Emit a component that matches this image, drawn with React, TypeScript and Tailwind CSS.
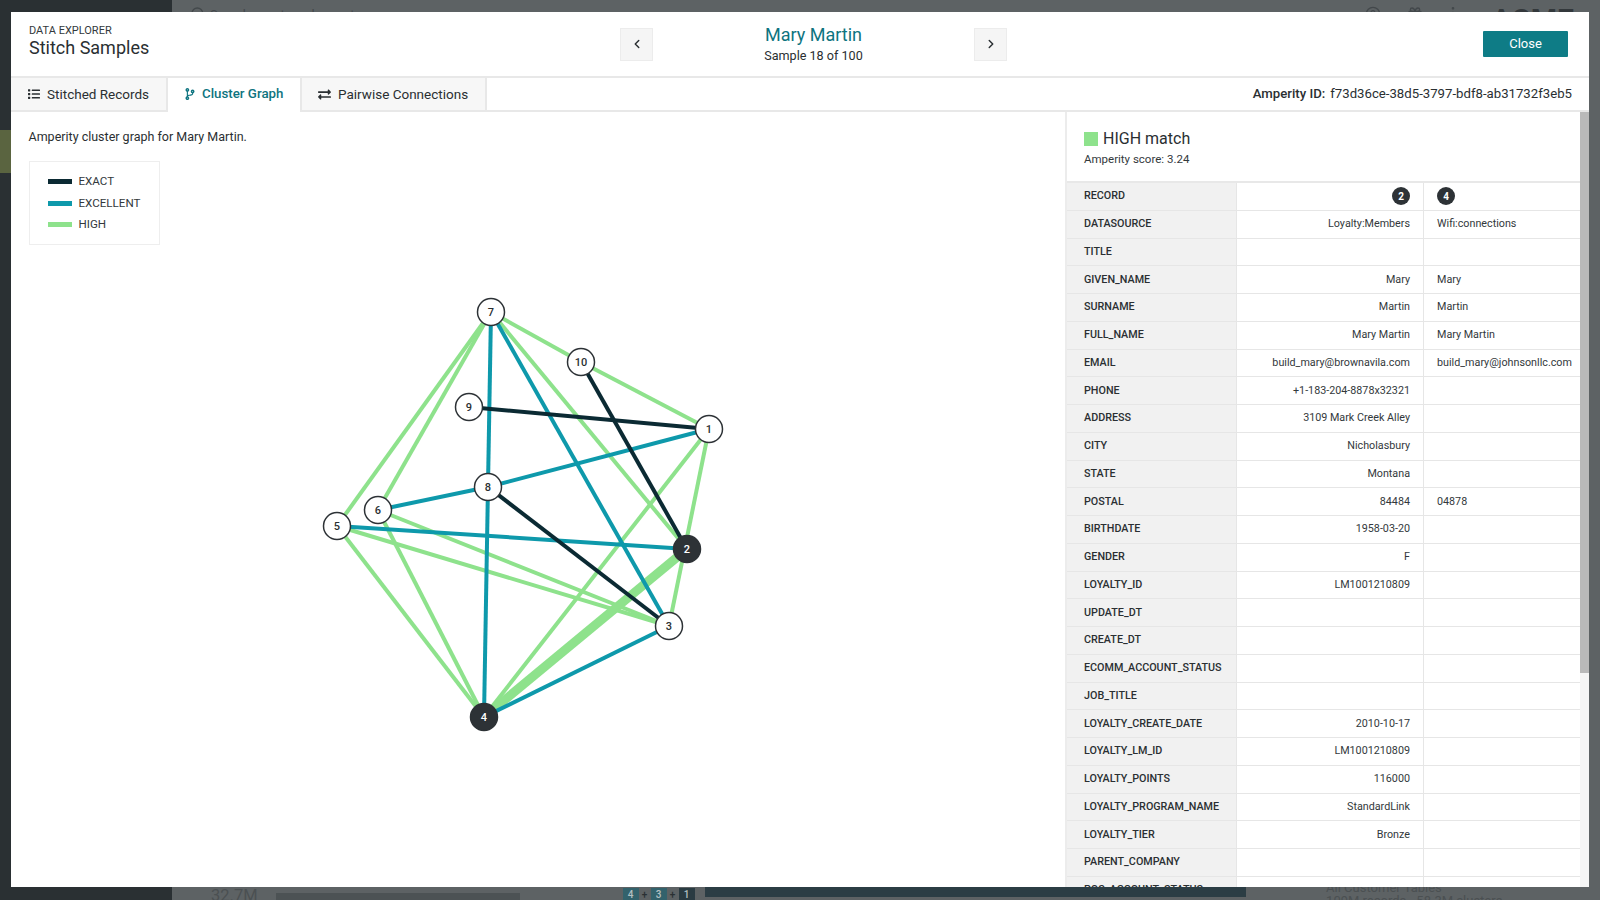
import { ChevronLeft, ChevronRight, Search, Gift, CircleHelp, EllipsisVertical, ChevronDown } from "lucide-react";
import { FaCodeBranch, FaExchangeAlt, FaList } from "react-icons/fa";

const TEAL = "#0e7c86";
const EXACT = "#0b2a33";
const EXCELLENT = "#0e99ab";
const HIGH = "#8ee28c";

const nodes: Record<number, [number, number]> = {
  1: [709, 429],
  2: [687, 549],
  3: [669, 626],
  4: [484, 717],
  5: [337, 526],
  6: [378, 510],
  7: [491, 312],
  8: [488, 487],
  9: [469, 407],
  10: [581, 362],
};

// from, to, colour, thickness
const edges: [number, number, string, number][] = [
  [7, 5, HIGH, 4],
  [7, 6, HIGH, 4],
  [7, 10, HIGH, 4],
  [7, 2, HIGH, 4],
  [10, 1, HIGH, 4],
  [1, 4, HIGH, 4],
  [1, 3, HIGH, 4],
  [5, 3, HIGH, 4],
  [6, 3, HIGH, 4],
  [5, 4, HIGH, 4],
  [6, 4, HIGH, 4],
  [2, 4, HIGH, 9],
  [7, 4, EXCELLENT, 4],
  [7, 3, EXCELLENT, 4],
  [8, 1, EXCELLENT, 4],
  [8, 6, EXCELLENT, 4],
  [5, 2, EXCELLENT, 4],
  [3, 4, EXCELLENT, 4],
  [10, 2, EXACT, 4],
  [9, 1, EXACT, 4],
  [8, 3, EXACT, 4],
];

const rows: [string, string, string][] = [
  ["DATASOURCE", "Loyalty:Members", "Wifi:connections"],
  ["TITLE", "", ""],
  ["GIVEN_NAME", "Mary", "Mary"],
  ["SURNAME", "Martin", "Martin"],
  ["FULL_NAME", "Mary Martin", "Mary Martin"],
  ["EMAIL", "build_mary@brownavila.com", "build_mary@johnsonllc.com"],
  ["PHONE", "+1-183-204-8878x32321", ""],
  ["ADDRESS", "3109 Mark Creek Alley", ""],
  ["CITY", "Nicholasbury", ""],
  ["STATE", "Montana", ""],
  ["POSTAL", "84484", "04878"],
  ["BIRTHDATE", "1958-03-20", ""],
  ["GENDER", "F", ""],
  ["LOYALTY_ID", "LM1001210809", ""],
  ["UPDATE_DT", "", ""],
  ["CREATE_DT", "", ""],
  ["ECOMM_ACCOUNT_STATUS", "", ""],
  ["JOB_TITLE", "", ""],
  ["LOYALTY_CREATE_DATE", "2010-10-17", ""],
  ["LOYALTY_LM_ID", "LM1001210809", ""],
  ["LOYALTY_POINTS", "116000", ""],
  ["LOYALTY_PROGRAM_NAME", "StandardLink", ""],
  ["LOYALTY_TIER", "Bronze", ""],
  ["PARENT_COMPANY", "", ""],
  ["POS_ACCOUNT_STATUS", "", ""],
];

function RecordBadge({ n }: { n: number }) {
  return (
    <span className="flex h-[18px] w-[18px] items-center justify-center rounded-full bg-[#2d3236] text-[10px] font-bold text-white">
      {n}
    </span>
  );
}

function Row({ label, left, right }: { label: string; left: React.ReactNode; right: React.ReactNode }) {
  return (
    <div className="flex h-[27.75px] shrink-0 border-b border-[#e6e6e6] text-[10.75px] text-[#33393c]">
      <div className="flex w-[170px] shrink-0 items-center border-r border-[#e6e6e6] bg-[#f1f1f1] pl-[17px] font-medium text-[#2a2f32]">
        {label}
      </div>
      <div className="flex w-[187px] shrink-0 items-center justify-end border-r border-[#e6e6e6] pr-[13px]">{left}</div>
      <div className="flex flex-1 items-center pl-[13px]">{right}</div>
    </div>
  );
}

function Graph() {
  // viewBox uses page coords, so node positions read straight off the screenshot
  return (
    <svg width="500" height="480" viewBox="310 290 500 480" className="block">
      {edges.map(([a, b, color, w], i) => (
        <line key={i} x1={nodes[a][0]} y1={nodes[a][1]} x2={nodes[b][0]} y2={nodes[b][1]} stroke={color} strokeWidth={w} />
      ))}
      {Object.entries(nodes).map(([id, [x, y]]) => {
        const filled = id === "2" || id === "4";
        return (
          <g key={id}>
            <circle cx={x} cy={y} r="13.5" fill={filled ? "#2d3236" : "#fff"} stroke="#2d3236" strokeWidth="1.5" />
            <text x={x} y={y + 4} textAnchor="middle" fontSize="11" fontWeight="500" fill={filled ? "#fff" : "#2a2f32"}>
              {id}
            </text>
          </g>
        );
      })}
    </svg>
  );
}

export default function App() {
  return (
    <div className="relative flex h-[900px] w-[1600px] overflow-hidden bg-[#5d6264] font-['Roboto',sans-serif]">
      {/* page behind the modal */}
      <div className="w-[172px] shrink-0 bg-[#2a3033] pt-[130px]">
        <div className="h-[43px] w-[11px] bg-[#5a6440]" />
      </div>
      <div className="flex flex-1 flex-col justify-between text-[#43484b]">
        <div className="flex items-start pl-[18px] pr-[12px] pt-[5px]">
          <Search size={16} className="mt-[1px]" />
          <span className="ml-[4px] text-[13px]">Search assets, columns to</span>
          <div className="ml-auto flex items-start">
            <CircleHelp size={16} className="mt-[1px]" />
            <Gift size={16} className="ml-[26px] mt-[1px]" />
            <EllipsisVertical size={16} className="ml-[22px]" />
            <span className="ml-[30px] text-[30px] font-bold leading-none text-[#33383b]">ACME</span>
            <ChevronDown size={12} className="ml-[2px] mt-[8px]" />
          </div>
        </div>
        <div className="flex h-[13px] items-start pl-[39px] text-[#4b5052]">
          <span className="mt-[-1px] text-[16.5px] leading-[20px]">32.7M</span>
          <div className="ml-[18px] mt-[6px] h-[8px] w-[244px] bg-[#4c5254]" />
          <div className="ml-[103px] flex items-center text-[10px] font-medium text-[#b4c0c2]">
            <span className="flex h-[13px] w-[16px] items-center justify-center bg-[#33626c]">4</span>
            <span className="w-[12px] text-center text-[#2a3033]">+</span>
            <span className="flex h-[13px] w-[16px] items-center justify-center bg-[#33626c]">3</span>
            <span className="w-[12px] text-center text-[#2a3033]">+</span>
            <span className="flex h-[13px] w-[16px] items-center justify-center bg-[#2a3b42]">1</span>
          </div>
          <div className="ml-[10.5px] h-[10px] w-[541px] bg-[#2b3d44]" />
          <div className="ml-[80px] mt-[-6px] text-[13px] leading-[13px]">
            <div>All Customer Tables</div>
            <div>109M records - 58.3M clusters</div>
          </div>
        </div>
      </div>

      {/* modal */}
      <div className="absolute left-[11px] top-[12px] flex h-[875px] w-[1578px] flex-col overflow-hidden bg-white text-[#2a2f32]">
        <header className="flex h-[66px] shrink-0 items-center border-b-2 border-[#e8e8e8] pl-[18px] pr-[21px]">
          <div className="w-[591px] pb-[6px]">
            <div className="text-[11px] leading-[13px] text-[#33393c]">DATA EXPLORER</div>
            <div className="text-[18px] leading-[22px]">Stitch Samples</div>
          </div>
          <button className="flex h-[33px] w-[33px] items-center justify-center border border-[#ececec] bg-[#f5f5f5]">
            <ChevronLeft size={14} strokeWidth={2.5} />
          </button>
          <div className="w-[321px] pb-[1px] text-center">
            <div className="text-[18px] leading-[22px] text-[#0e7480]">Mary Martin</div>
            <div className="mt-[1px] text-[12.6px] leading-[17px]">Sample 18 of 100</div>
          </div>
          <button className="flex h-[33px] w-[33px] items-center justify-center border border-[#ececec] bg-[#f5f5f5]">
            <ChevronRight size={14} strokeWidth={2.5} />
          </button>
          <button className="ml-auto h-[26px] w-[85px] rounded-[1px] text-[13px] text-white" style={{ background: TEAL }}>
            Close
          </button>
        </header>

        <nav className="flex h-[34px] shrink-0 items-stretch border-b-2 border-[#e8e8e8] text-[13.5px]">
          <div className="flex w-[155px] items-center gap-[7px] bg-[#f7f7f7] pl-[17px]">
            <FaList size={12} />
            Stitched Records
          </div>
          <div className="mb-[-2px] flex w-[136px] items-center gap-[6px] border-x-2 border-[#e8e8e8] bg-white pb-[2px] pl-[16px] text-[13.3px] font-medium text-[#0e7480]">
            <FaCodeBranch size={12} />
            Cluster Graph
          </div>
          <div className="flex w-[185px] items-center gap-[7px] border-r-2 border-[#e8e8e8] bg-[#f7f7f7] pl-[16px]">
            <FaExchangeAlt size={13} />
            Pairwise Connections
          </div>
          <div className="ml-auto flex items-center pr-[17px] text-[13.2px]">
            <span className="mr-[5px] font-medium">Amperity ID:</span>
            f73d36ce-38d5-3797-bdf8-ab31732f3eb5
          </div>
        </nav>

        <div className="flex min-h-0 flex-1">
          <section className="relative w-[1054px] shrink-0 pl-[17.5px] pt-[16.5px]">
            <p className="text-[12.5px] leading-[16px]">Amperity cluster graph for Mary Martin.</p>
            <div className="mt-[16.5px] flex h-[84px] w-[131px] flex-col justify-center gap-[6.5px] border border-[#eeeeee] pl-[18px] text-[11.6px] leading-[15px] text-[#33393c]">
              <div className="flex items-center gap-[7px]">
                <span className="h-[5px] w-[24px]" style={{ background: EXACT }} />
                EXACT
              </div>
              <div className="flex items-center gap-[7px]">
                <span className="h-[5px] w-[24px]" style={{ background: EXCELLENT }} />
                EXCELLENT
              </div>
              <div className="flex items-center gap-[7px]">
                <span className="h-[5px] w-[24px]" style={{ background: HIGH }} />
                HIGH
              </div>
            </div>
            <div className="absolute left-[299px] top-[178px]">
              <Graph />
            </div>
          </section>

          <aside className="relative flex min-w-0 flex-1 flex-col overflow-hidden border-l-2 border-[#ececec]">
            <div className="h-[71px] shrink-0 border-b-2 border-[#e8e8e8] pl-[17px] pt-[17px]">
              <div className="flex items-center gap-[5px] text-[16px] leading-[20px]">
                <span className="h-[14px] w-[14px] bg-[#8ee28c]" />
                HIGH match
              </div>
              <div className="mt-[2.5px] text-[11.5px] leading-[15px] text-[#33393c]">Amperity score: 3.24</div>
            </div>
            <Row label="RECORD" left={<RecordBadge n={2} />} right={<RecordBadge n={4} />} />
            {rows.map(([label, left, right]) => (
              <Row key={label} label={label} left={left} right={right} />
            ))}
            <div className="absolute bottom-0 right-0 top-0 w-[9px] bg-[#f5f5f5]">
              <div className="h-[561px] bg-[#b9b9b9]" />
            </div>
          </aside>
        </div>
      </div>
    </div>
  );
}
